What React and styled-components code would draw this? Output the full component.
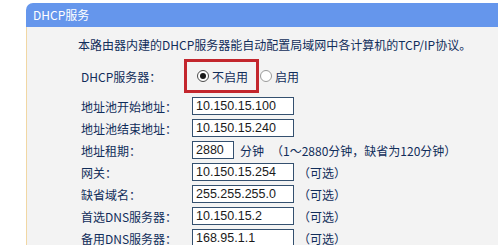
import React, { useState } from 'react'
import styled, { createGlobalStyle } from 'styled-components'

const GlobalStyle = createGlobalStyle`
  html, body {
    margin: 0;
    padding: 0;
    background: #ffffff;
  }
  body {
    font-family: "Noto Sans CJK SC", "Noto Sans", sans-serif;
    overflow: hidden;
  }
`

const Page = styled.div`
  width: 498px;
  height: 245px;
  overflow: hidden;
  padding-top: 3px;
  box-sizing: border-box;
`

const Panel = styled.div`
  margin-left: 26px;
  width: 480px;
`

const Header = styled.div`
  height: 24px;
  line-height: 24px;
  background: #6596ec;
  border-top-left-radius: 7px;
  color: #ffffff;
  font-size: 12px;
  padding-left: 7px;
`

const Body = styled.div`
  background: #f3f3f3;
  border-left: 1px solid #f1d7a4;
  padding: 9px 0 0 51px;
  height: 240px;
  color: #112d5a;
`

const Intro = styled.div`
  font-size: 12px;
  line-height: 18px;
  margin-bottom: 5px;
  white-space: nowrap;
`

const Form = styled.div`
  margin-left: 3px;
`

const Row = styled.div`
  display: flex;
  align-items: center;
  height: ${p => (p.$tall ? '34px' : '22px')};
  margin-bottom: ${p => (p.$tall ? '2px' : '0')};
  font-size: 12px;
  white-space: nowrap;
`

const Label = styled.div`
  width: 111px;
  flex-shrink: 0;
`

const Highlight = styled.span`
  display: flex;
  align-items: center;
  height: 34px;
  box-sizing: border-box;
  border: 3px solid #c3262d;
  margin-left: -8px;
  padding: 0 8px 0 10px;
`

const Option = styled.label`
  display: flex;
  align-items: center;
  gap: 3px;
  margin-left: ${p => p.$offset || 0}px;
  cursor: pointer;
`

const Radio = styled.span`
  width: 12px;
  height: 12px;
  box-sizing: border-box;
  border-radius: 50%;
  border: 1px solid ${p => (p.$checked ? '#4a4a4a' : '#9a9a9a')};
  background: #ffffff;
  display: flex;
  align-items: center;
  justify-content: center;
  &::after {
    content: '';
    width: 6px;
    height: 6px;
    border-radius: 50%;
    background: ${p => (p.$checked ? '#1a1a1a' : 'transparent')};
  }
`

const Input = styled.input`
  width: ${p => p.$w || 102}px;
  height: 18px;
  box-sizing: border-box;
  border: 1px solid #34506f;
  background: #ffffff;
  padding: 0 3px;
  font-family: "Liberation Sans", Arial, sans-serif;
  font-size: 12.5px;
  color: #1a1a1a;
  outline: none;
`

const Note = styled.span`
  margin-left: ${p => p.$gap || 3}px;
`

const fields = [
  { label: '地址池开始地址：', value: '10.150.15.100' },
  { label: '地址池结束地址：', value: '10.150.15.240' },
  { label: '地址租期：', value: '2880', lease: true },
  { label: '网关：', value: '10.150.15.254', optional: true },
  { label: '缺省域名：', value: '255.255.255.0', optional: true },
  { label: '首选DNS服务器：', value: '10.150.15.2', optional: true },
  { label: '备用DNS服务器：', value: '168.95.1.1', optional: true },
]

function App() {
  const [enabled, setEnabled] = useState(false)

  return (
    <Page>
      <GlobalStyle />
      <Panel>
        <Header>DHCP服务</Header>
        <Body>
          <Intro>本路由器内建的DHCP服务器能自动配置局域网中各计算机的TCP/IP协议。</Intro>
          <Form>
            <Row $tall>
              <Label>DHCP服务器：</Label>
              <Highlight>
                <Option onClick={() => setEnabled(false)}>
                  <Radio $checked={!enabled} />
                  不启用
                </Option>
              </Highlight>
              <Option $offset={1} onClick={() => setEnabled(true)}>
                <Radio $checked={enabled} />
                启用
              </Option>
            </Row>
            {fields.map(f => (
              <Row key={f.label}>
                <Label>{f.label}</Label>
                <Input $w={f.lease ? 42 : 102} defaultValue={f.value} />
                {f.lease && (
                  <>
                    <Note $gap={6}>分钟</Note>
                    <Note $gap={7}>（1～2880分钟，缺省为120分钟）</Note>
                  </>
                )}
                {f.optional && <Note $gap={4}>（可选）</Note>}
              </Row>
            ))}
          </Form>
        </Body>
      </Panel>
    </Page>
  )
}

export default App
